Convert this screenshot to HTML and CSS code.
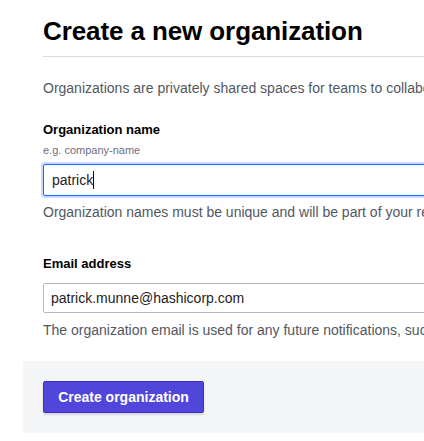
FILE: index.html
```html
<!DOCTYPE html>
<html>
<head>
<meta charset="utf-8">
<link rel="stylesheet" href="styles.css">
</head>
<body>
<div class="page">
  <div class="header">
    <h1 class="title">Create a new organization</h1>
  </div>
  <p class="intro">Organizations are privately shared spaces for teams to collaborate on infrastructure.</p>
  <div class="field name">
    <label class="label">Organization name</label>
    <div class="hint">e.g. company-name</div>
    <div class="input focused"><span>patrick</span><span class="caret"></span></div>
    <div class="help">Organization names must be unique and will be part of your resource names used in various tools.</div>
  </div>
  <div class="field email">
    <label class="label">Email address</label>
    <div class="input"><span>patrick.munne@hashicorp.com</span></div>
    <div class="help">The organization email is used for any future notifications, such as billing alerts.</div>
  </div>
  <div class="footer">
    <button class="btn">Create organization</button>
  </div>
</div>
</body>
</html>
```
FILE: styles.css
```css
html, body {
  margin: 0;
  padding: 0;
  background: #fff;
  overflow: hidden;
}
body {
  font-family: "Liberation Sans", Arial, sans-serif;
  color: #1f2124;
}
.page {
  width: 760px;
  padding-left: 23px;
  padding-top: 16px;
}
.header {
  margin-left: 20px;
  border-bottom: 1px solid #d8dbe0;
  padding-bottom: 10px;
}
.title {
  margin: 0;
  font-size: 26px;
  line-height: 30px;
  font-weight: 700;
  color: #000;
  letter-spacing: -0.1px;
}
.intro {
  margin: 22px 0 0 20px;
  font-size: 14px;
  line-height: 18px;
  color: #525761;
  white-space: nowrap;
}
.field {
  margin-left: 20px;
  display: flex;
  flex-direction: column;
}
.field.name { margin-top: 25px; }
.label {
  font-size: 13px;
  font-weight: 700;
  line-height: 16px;
  color: #000;
}
.hint {
  font-size: 11px;
  line-height: 16px;
  color: #6b7080;
  margin-top: 4px;
}
.input {
  box-sizing: border-box;
  height: 32px;
  margin-top: 6px;
  border: 1px solid #b3b9c4;
  border-radius: 2px;
  display: flex;
  align-items: center;
  padding-left: 8px;
  font-size: 14px;
  color: #1f2124;
}
.input.focused {
  border-color: #1563ff;
  box-shadow: 0 0 0 2px #c9daff;
}
.caret {
  display: inline-block;
  width: 1px;
  height: 18px;
  background: #000;
}
.help {
  margin-top: 7px;
  font-size: 14px;
  line-height: 18px;
  color: #525761;
  white-space: nowrap;
}
.field.email { margin-top: 35px; }
.email .input { margin-top: 11px; height: 30px; padding-left: 7px; }
.email .help { margin-top: 8px; }
.footer {
  margin-top: 22px;
  background: #f4f5f7;
  padding: 20px 20px 20px;
}
.btn {
  font-family: "Liberation Sans", Arial, sans-serif;
  font-size: 14px;
  font-weight: 700;
  color: #fff;
  background: #5146dc;
  border: 1px solid #3b30c6;
  border-radius: 2px;
  height: 32px;
  width: 161px;
  padding: 0;
  box-shadow: 0 2px 2px rgba(0,0,0,0.12);
}
```
